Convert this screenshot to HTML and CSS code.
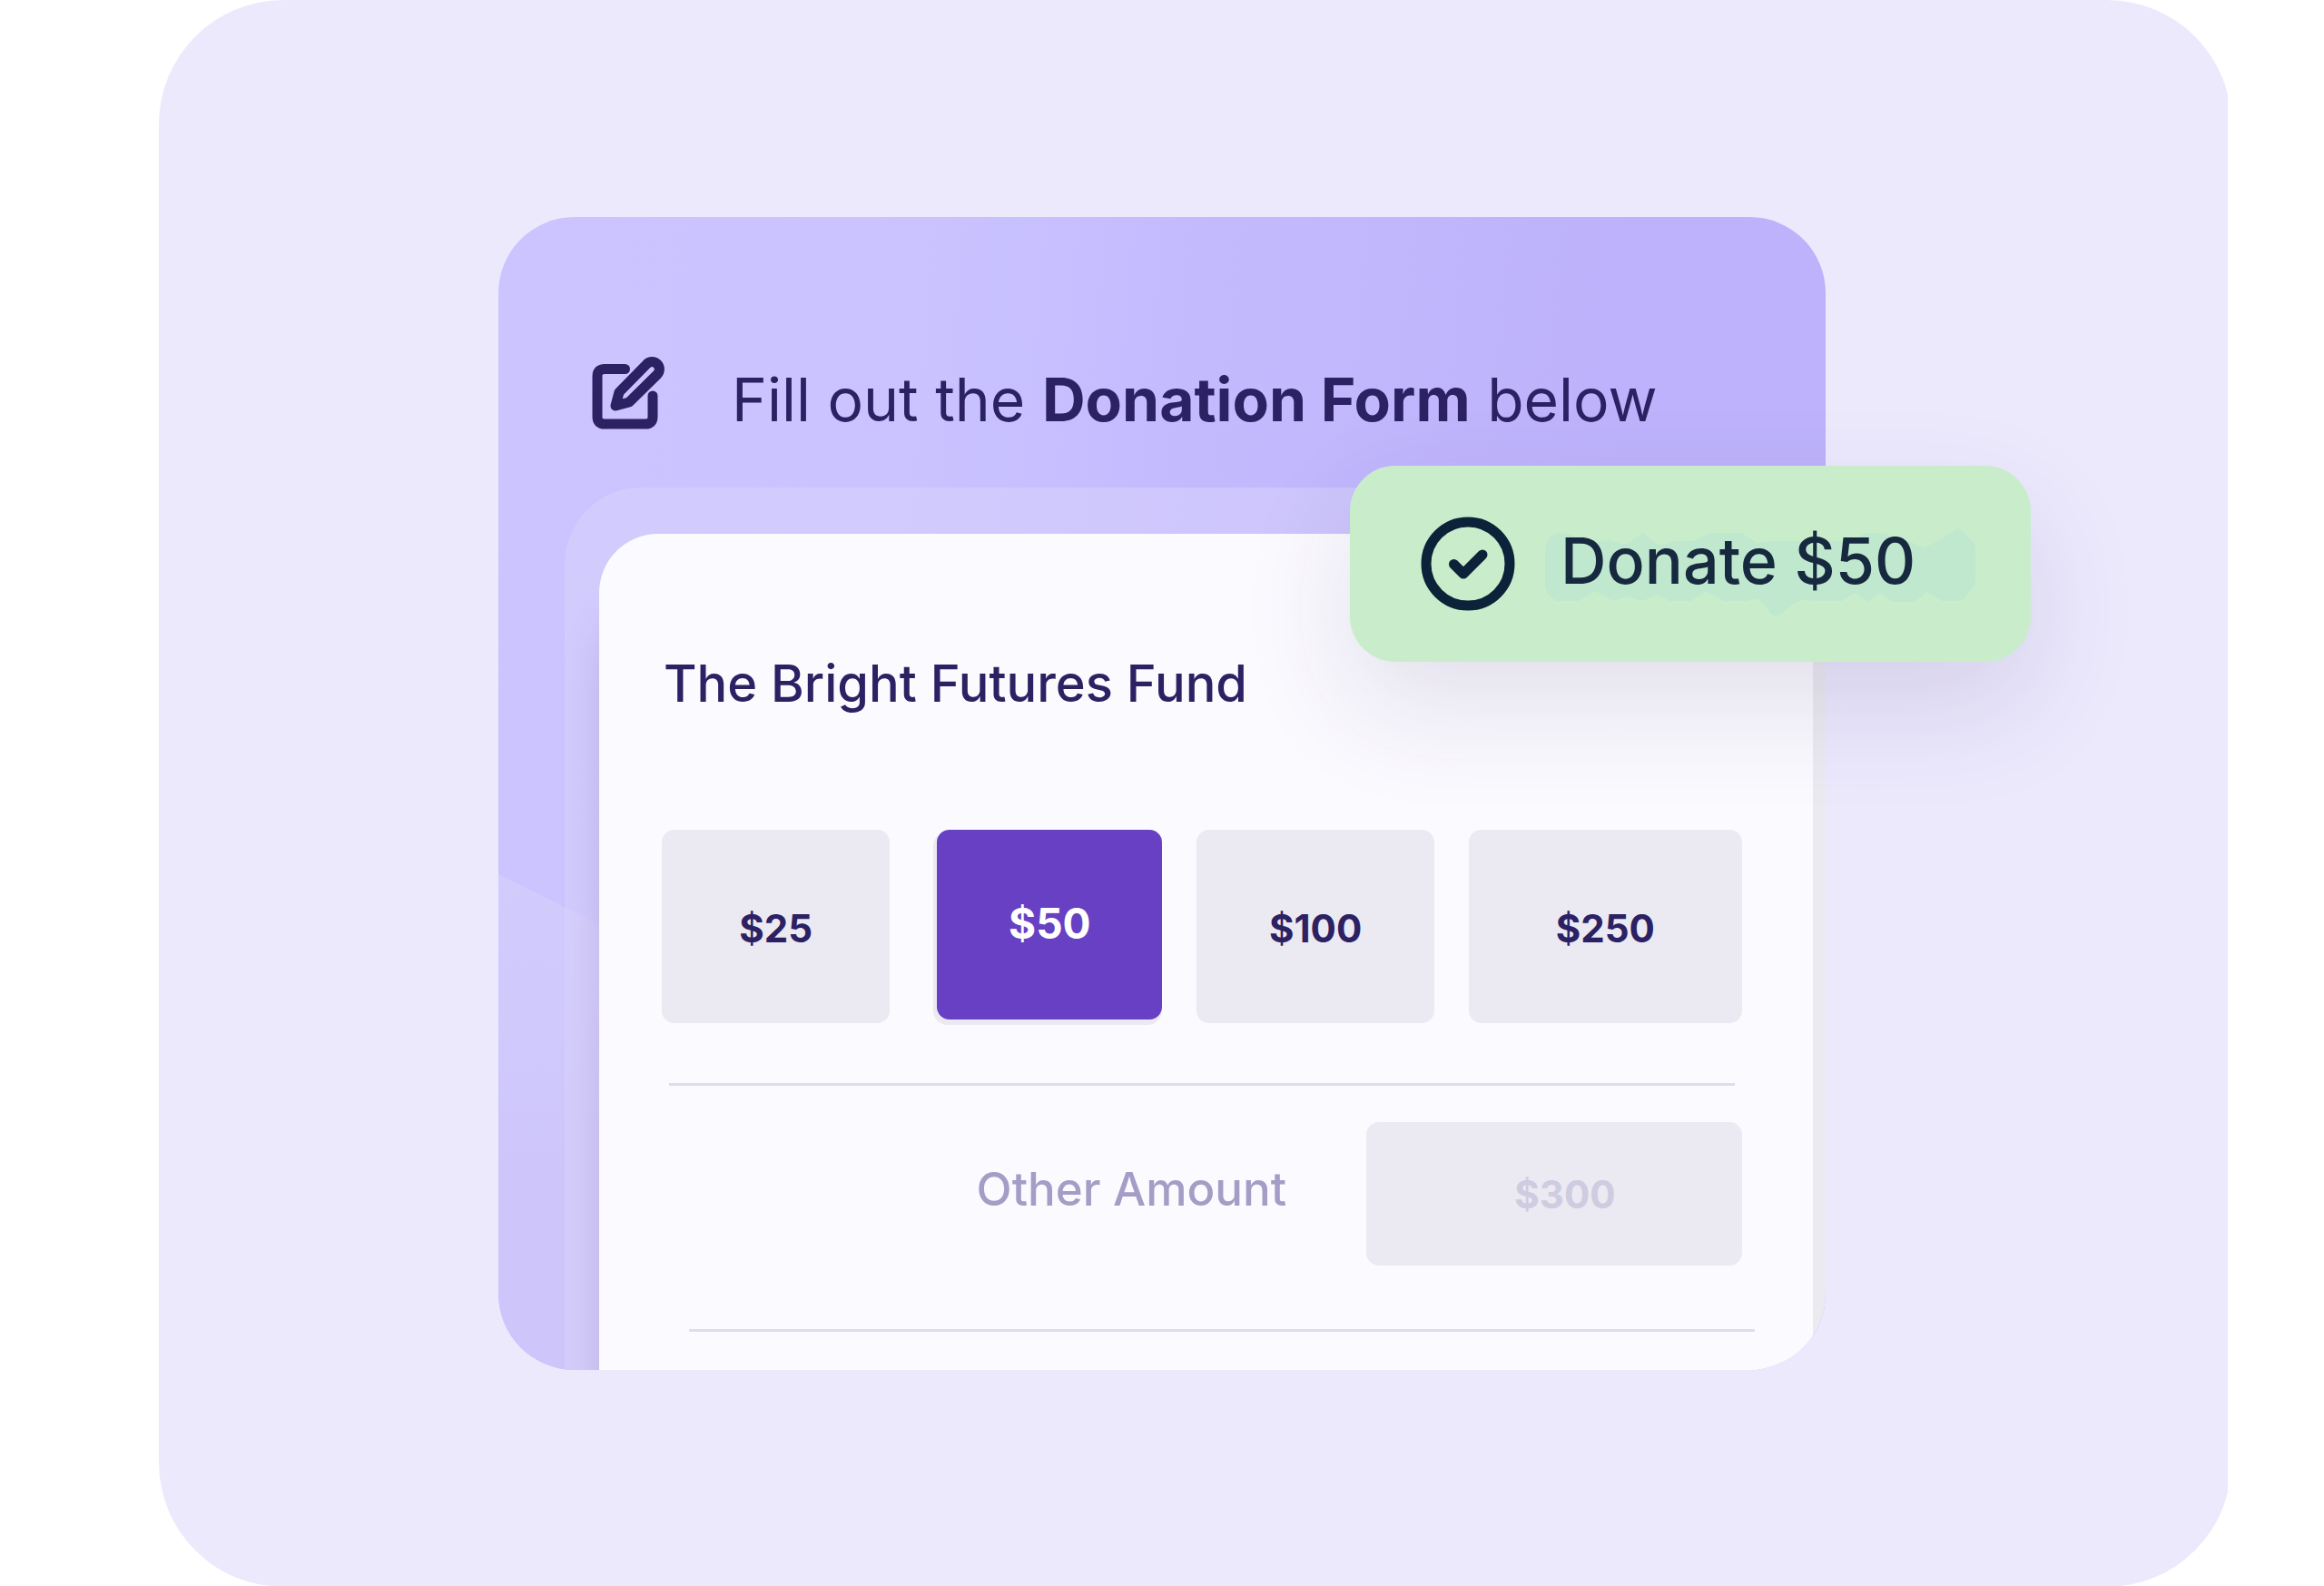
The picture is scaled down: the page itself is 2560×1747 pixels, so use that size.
FILE: index.html
```html
<!DOCTYPE html>
<html lang="en">
<head>
    <meta charset="UTF-8">
    <meta name="viewport" content="width=device-width, initial-scale=1.0">
    <title>Donation Form</title>
    <link rel="stylesheet" href="styles.css">
</head>
<body>
    <main class="panel">
        <div class="card-wrap">
            <form class="card">
                <header class="card-header">
                    <svg class="edit-icon" viewBox="22 22 80 80" aria-hidden="true">
                        <path d="M58.5 35.5H36q-8 0-8 8V88q0 8 8 8H81q8 0 8-8V65"/>
                        <path d="M82.5 30A7.8 7.8 0 0 1 94 41.500L63 72 48 76 52 61Z"/>
                    </svg>
                    <h1>Fill out the <strong>Donation Form</strong> below</h1>
                </header>

                <div class="sheet">
                    <h2>The Bright Futures Fund</h2>

                    <!-- Preset amounts -->
                    <div class="amounts">
                        <button type="button" class="amount amount-25">$25</button>
                        <button type="button" class="amount amount-50 selected">$50</button>
                        <button type="button" class="amount amount-100">$100</button>
                        <button type="button" class="amount amount-250">$250</button>
                    </div>

                    <hr class="divider">

                    <!-- Custom amount -->
                    <div class="other">
                        <label for="otherAmount">Other Amount</label>
                        <input type="text" id="otherAmount" placeholder="$300">
                    </div>

                    <hr class="divider divider-last">
                </div>
            </form>

            <button type="button" class="donate">
                <svg class="check-icon" viewBox="24 18 104 104" aria-hidden="true">
                    <circle cx="76" cy="70" r="46"/>
                    <path d="M60.500 70.500 71 81 92 60"/>
                </svg>
                <span class="donate-label">
                    <svg class="smudge" viewBox="0 0 480 100" aria-hidden="true">
                        <path d="M3 28Q4 6 20 6L34 8Q42 20 50 19 62 15 76 14 90 22 98 15L111 6 124 17Q134 22 142 15 156 15 166 15L186 6H220L236 17 250 15H284L298 22 312 15H340L356 6H378L388 15H404L420 22 436 15 454 3Q462 -1 468 10L476 18Q479 40 476 64L462 81H440L424 71 410 82H386L372 72 358 82 344 72 330 81H298Q284 78 276 85L262 96Q256 100 250 93L238 78 224 81H200L180 70 164 81H140L126 74 110 81 94 76 78 81 58 70 40 81H16Q5 76 3 66Z"/>
                    </svg>
                    Donate $50
                </span>
            </button>
        </div>
    </main>
</body>
</html>
```
FILE: styles.css
```css
* {
    margin: 0;
    padding: 0;
    box-sizing: border-box;
}

body {
    font-family: Inter, "Open Sans", sans-serif;
    background: white;
    color: #2c2163;
}

button,
input {
    font-family: inherit;
    border: none;
}

.panel {
    min-height: 100vh;
    margin: 0 102px 0 175px;
    padding: 239px 447px 239px 374px;
    background: #ece9fd;
    border-radius: 137px;
    clip-path: inset(0 4px 0 0);
}

.card-wrap {
    position: relative;
}

.card {
    position: relative;
    z-index: 0;
    overflow: hidden;
    border-radius: 84px;
    background: linear-gradient(95deg, #cbc4ff 0%, #cac3ff 30%, #c3bafe 50%, #bdb2fb 80%);
}

/* lighter wave in the bottom left corner */
.card::before {
    content: "";
    position: absolute;
    z-index: -1;
    left: 0;
    bottom: 0;
    width: 112px;
    height: 546px;
    background: linear-gradient(180deg, #d2ccfd, #cec6fb 60%);
    clip-path: polygon(0 0, 100% 56px, 100% 100%, 0 100%);
}

/* translucent sheet behind the white one */
.card::after {
    content: "";
    position: absolute;
    z-index: -1;
    inset: 298px 0 0 73px;
    border-radius: 84px 0 0 0;
    background: rgba(217, 211, 251, 0.5);
}

.card-header {
    display: flex;
    align-items: center;
    gap: 74px;
    height: 349px;
    padding: 52px 103px 0;
}

.card-header h1 {
    font-size: 66px;
    font-weight: 400;
    line-height: 80px;
    white-space: nowrap;
}

.card-header strong {
    font-weight: 700;
}

.edit-icon {
    flex: none;
    width: 80px;
    height: 80px;
    margin-bottom: 14px;
    fill: none;
    stroke: #2c2163;
    stroke-width: 11;
    stroke-linecap: round;
    stroke-linejoin: round;
}

.sheet {
    margin: 0 14px 0 111px;
    padding: 130px 78px 42px 69px;
    background: #fbfaff;
    border-radius: 65px 0 0 0;
    box-shadow: 14px 65px 0 #ebeaf1, 0 80px 40px rgba(120, 90, 150, 0.22);
}

.sheet h2 {
    padding-left: 2px;
    font-size: 56px;
    font-weight: 500;
    line-height: 70px;
}

.amounts {
    display: flex;
    gap: 38px;
    margin-top: 126px;
}

.amount {
    height: 213px;
    padding-top: 4px;
    border-radius: 14px;
    background: #ebe9f2;
    color: #2c2163;
    font-size: 42px;
    font-weight: 700;
}

.amount-25 {
    flex: 251 1 0;
    margin-right: 14px;
}

.amount-50 {
    flex: 248 1 0;
}

.amount-100 {
    flex: 261 1 0;
}

.amount-250 {
    flex: 301 1 0;
}

.amount.selected {
    height: 209px;
    padding: 0 0 4px;
    background: #6840c4;
    color: white;
    font-size: 46px;
    box-shadow: -2px 4px 0 2px #ebe9f2;
}

.divider {
    height: 3px;
    margin: 66px 8px 0;
    border: none;
    background: #dfdcef;
}

.other {
    display: flex;
    align-items: center;
    justify-content: flex-end;
    gap: 88px;
    margin-top: 40px;
}

.other label {
    padding-bottom: 10px;
    color: #a59dc6;
    font-size: 51px;
    font-weight: 500;
    line-height: 60px;
}

.other input {
    width: 414px;
    height: 158px;
    padding-left: 24px;
    border-radius: 14px;
    background: #ebe9f2;
    color: #2c2163;
    font-size: 42px;
    font-weight: 700;
    text-align: center;
}

.other input::placeholder {
    color: #cfcbe0;
    opacity: 1;
}

.divider-last {
    margin: 70px -14px 0 30px;
}

/* floating confirmation over the card's right edge */
.donate {
    position: absolute;
    top: 274px;
    right: -226px;
    z-index: 1;
    display: flex;
    align-items: center;
    gap: 50px;
    width: 750px;
    height: 216px;
    padding: 0 78px;
    border-radius: 50px;
    background: #c9edcb;
    color: #16293f;
    box-shadow: 0 50px 120px rgba(60, 50, 100, 0.13);
}

.check-icon {
    flex: none;
    width: 104px;
    height: 104px;
    fill: none;
    stroke: #0c2239;
    stroke-width: 11;
    stroke-linecap: round;
    stroke-linejoin: round;
}

.donate-label {
    position: relative;
    z-index: 0;
    padding-bottom: 8px;
    font-size: 70px;
    font-weight: 500;
    white-space: nowrap;
}

.smudge {
    position: absolute;
    z-index: -1;
    top: 6px;
    left: -20px;
    width: 480px;
    height: 100px;
    fill: #c0e8cf;
}
```
